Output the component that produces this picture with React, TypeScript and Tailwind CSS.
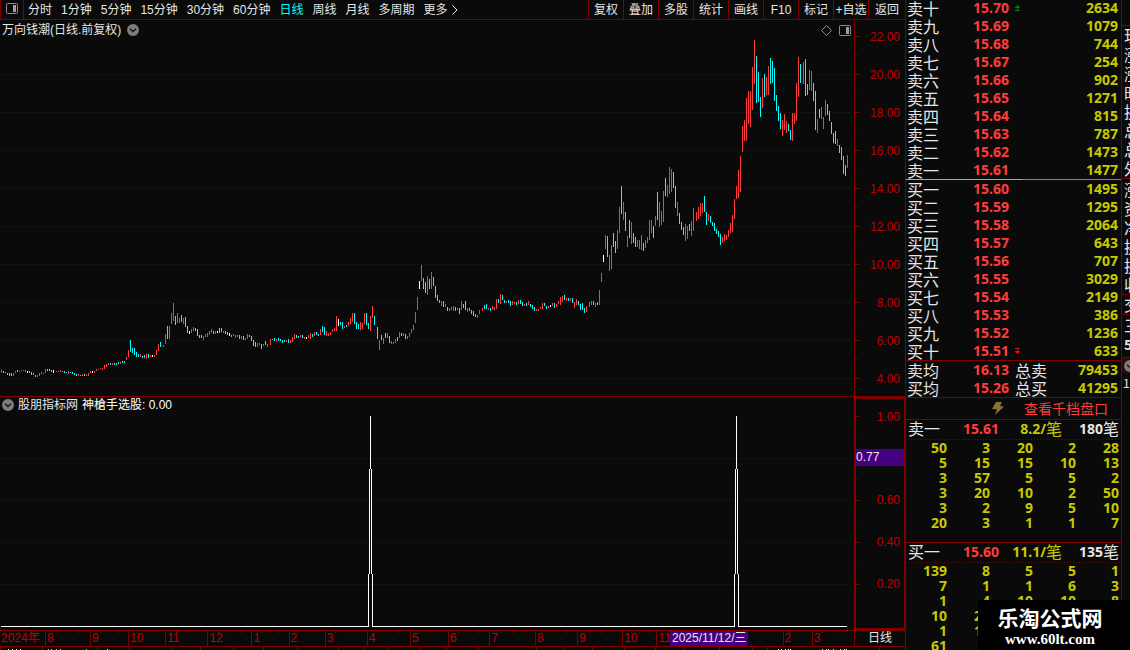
import React from "react";

const SANS = "font-['Liberation_Sans','Noto_Sans_CJK_SC',sans-serif]";

/* Daily ranges: top and bottom row of each bar plus its colour (r up, c down, w flat). */
const RUNS: { x: number; bars: string }[] = [
  {
    x: 1,
    bars: "370-373r 371-373c 372-373c 373-375c 373-376c 373-376c 373-376r 371-373r 370-372c 371-372r 370-371r 370-371r 370-372r 371-373w 371-373c 372-375c 373-375c 375-377c 375-377r 373-376r 372-374r 373-374r 369-373r 369-371c 369-371c 370-372c 370-373w",
  },
  {
    x: 56,
    bars: "371-372r 371-372r 370-372r 371-372c 371-373c 372-373c 371-374r 372-373c 372-374c 373-375c 374-376c 374-376r 375-376c 374-376r 374-376c 374-376r 373-376r 371-373r 371-373w 371-373r 369-371r 369-370r 368-369r 368-370r 365-369r 364-367r 363-365r 363-365c 363-365r 363-365c 363-365c 362-364c 362-364r 361-363c 361-363c 357-360r 350-357r 340-352c 348-353c 348-355c 352-357c 354-357c 354-357r 356-358c 355-358c 354-359r 354-358c 355-357r 355-357w 355-357r 350-355r 344-351r 342-347c",
  },
  {
    x: 163,
    bars: "345-347r 334-344r 326-339c 326-339r 313-324r 303-321r 316-325c 313-323r 318-323r 315-322c 318-324r 317-327c 326-333c 331-334w 329-333r 327-331r 328-331c 329-336c 335-338c 335-338c 336-340r 334-337r 333-337r 331-335r 329-333r 331-334c 331-334r 331-333w 328-333c 328-332c 331-333r 331-334c 332-335c 333-336w 335-337c 334-336r 335-338r 335-337r 335-339c 336-339r 336-340c 338-340r 334-339r 335-337c 336-341c 340-346c 342-347c 343-347r 343-345r 344-349c 344-346r 341-345c 344-347r",
  },
  {
    x: 270,
    bars: "339-345r 339-340c 338-341c 339-341r 338-341c 339-341c 340-343c 340-342c 340-342r 339-343c 340-343r 337-342r 334-339r 335-338c 336-338c 335-337r 335-338c 337-339r 337-339w 335-338r 333-339r 334-337c 332-336r 332-335c 334-336c 329-335r 326-332c 327-335c 331-336r 333-336r 332-335r 329-332r 328-331r 316-331r 319-326w 322-325c 322-329c 326-328r 325-327c 322-326r 318-324r 313-322r 313-324c 322-329c 324-329c 322-330r 323-329r 313-324r 313-325c 323-329c 316-331r 306-318r 316-325c",
  },
  {
    x: 377,
    bars: "327-339c 340-350r 335-340c 338-344r 333-338c 333-338r 336-343c 341-344r 342-344r 339-343r 337-341c 332-338r 333-336c 333-336r 334-339c 336-339r 333-337r 329-333r 325-330r 312-323r 297-310r 281-289w 265-281r 278-289c 282-293c 276-295r 279-289c 272-289r 277-286c 286-298c 295-301c 300-303c 301-306r 301-307c 304-307r 307-311c 308-311r 307-310r 306-311r 307-311c 308-310r 308-314c 301-310r 304-308c 301-310c 308-312r 308-311c 310-314c 311-316c 314-317c 315-318r 310-314r",
  },
  {
    x: 482,
    bars: "308-311r 305-309c 304-309c 308-310r 308-311c 306-310r 307-310r 299-309r 299-303c 294-304r 295-300c 300-303c 301-303r 300-303c 301-306c 301-305r 302-304r 302-305c 300-304r 300-304c 302-306c 304-306r 303-306c 301-305r 304-307c 305-309c 307-311c 309-311r 309-311r 307-309r 303-309r 303-306c 306-309c 306-308r 305-307w 303-306r 303-308c 304-307r 301-304r 297-305r 296-302r 295-300c 298-301r 298-301c 298-301r 298-303c 302-308r 299-305r 301-305c 304-310c 303-310c 308-313c 306-312r",
  },
  {
    x: 589,
    bars: "302-307r 301-305r 301-305c 303-307r 302-305c 290-305r 273-282r 255-262w 235-249r 236-257c 255-271r 245-269r 233-247c 241-253c 230-249r 207-233r 186-214c 202-220r 212-231c 236-247r 220-238c 222-244r 233-243c 237-247c 240-247r 240-249r 235-250r 243-251c 240-248r 237-243r 220-240r 220-233r 226-238c 216-226r 192-220c 202-227r 211-225r 191-222r 178-196c 185-197r 167-194r 169-192r 172-188c 186-208c 202-216r 213-224c 222-230c 227-235c 224-241r 226-239r 224-231c 221-236r 208-231r",
  },
  {
    x: 696,
    bars: "212-221r 207-219r 203-216r 203-213r 196-212c 212-225c 214-221r 216-223c 222-226c 223-231c 229-234c 231-237c 234-245c 237-243r 234-241r 235-240r 230-237r 223-233r 215-232r 199-219r 186-199r 170-198r 156-192r 126-152r 120-141r 98-141r 91-124r 91-127r 67-110r 40-84r 56-103c 72-102c 97-117c 78-108r 74-97c 77-95r 66-95r 58-84c 61-83c 68-101c 95-111c 106-121c 113-129c 120-136r 114-130r 121-133r 124-131c 130-140c 113-141r 113-124r 83-121r 57-97r 64-83c",
  },
  {
    x: 803,
    bars: "62-84r 59-96c 84-95c 70-90r 71-91r 83-101c 91-130c 119-133r 109-118c 107-119r 117-129r 100-116r 104-115c 111-121c 122-134c 133-143c 131-144c 139-146r 145-153c 147-160c 156-174c 165-176c 155-168r",
  },
];

const BAR_FILL: Record<string, string> = { r: "#ff3c3c", c: "#00ffff", w: "#ffffff" };

const bars = RUNS.flatMap((run) =>
  run.bars.split(" ").map((b, i) => {
    const [top, rest] = b.split("-");
    return {
      x: run.x + i * 2,
      y: Number(top),
      h: parseInt(rest, 10) - Number(top),
      fill: BAR_FILL[rest.slice(-1)],
    };
  }),
);

const PERIODS = ["分时", "1分钟", "5分钟", "15分钟", "30分钟", "60分钟", "日线", "周线", "月线", "多周期"];
const TOOLS = ["复权", "叠加", "多股", "统计", "画线", "F10", "标记", "+自选", "返回"];
const PRICE_LABELS = ["22.00", "20.00", "18.00", "16.00", "14.00", "12.00", "10.00", "8.00", "6.00", "4.00"];

const MONTHS: [string, number][] = [
  ["2024年", 46],
  ["8", 45],
  ["9", 38],
  ["10", 37],
  ["11", 42],
  ["12", 44],
  ["1", 37],
  ["2", 36],
  ["3", 42],
  ["4", 43],
  ["5", 38],
  ["6", 41],
  ["7", 46],
  ["8", 42],
  ["9", 45],
  ["10", 34],
  ["11", 92],
  ["", 35],
  ["2", 29],
  ["3", 42],
];

const SELLS = [
  ["卖十", "15.70", "2634"],
  ["卖九", "15.69", "1079"],
  ["卖八", "15.68", "744"],
  ["卖七", "15.67", "254"],
  ["卖六", "15.66", "902"],
  ["卖五", "15.65", "1271"],
  ["卖四", "15.64", "815"],
  ["卖三", "15.63", "787"],
  ["卖二", "15.62", "1473"],
  ["卖一", "15.61", "1477"],
];
const BUYS = [
  ["买一", "15.60", "1495"],
  ["买二", "15.59", "1295"],
  ["买三", "15.58", "2064"],
  ["买四", "15.57", "643"],
  ["买五", "15.56", "707"],
  ["买六", "15.55", "3029"],
  ["买七", "15.54", "2149"],
  ["买八", "15.53", "386"],
  ["买九", "15.52", "1236"],
  ["买十", "15.51", "633"],
];
const AVERAGES = [
  ["卖均", "16.13", "79453", "总卖"],
  ["买均", "15.26", "41295", "总买"],
];

const SELL_TICKETS = [
  [50, 3, 20, 2, 28],
  [5, 15, 15, 10, 13],
  [3, 57, 5, 5, 2],
  [3, 20, 10, 2, 50],
  [3, 2, 9, 5, 10],
  [20, 3, 1, 1, 7],
];
const BUY_TICKETS = [
  [139, 8, 5, 5, 1],
  [7, 1, 1, 6, 3],
  [1, 4, 10, 10, 8],
  [10, 20],
  [1, 10],
  [61],
];

function PanelIcon({ className }: { className: string }) {
  return (
    <svg viewBox="0 0 12 11" className={className} aria-hidden="true">
      <rect x="0.5" y="0.5" width="11" height="10" rx="1" fill="none" stroke="#8c8c8c" />
      <rect x="7" y="2" width="3" height="7" fill="#a0a0a0" />
    </svg>
  );
}

function RoundChevron() {
  return (
    <svg viewBox="0 0 12 12" className="size-3 shrink-0" aria-hidden="true">
      <circle cx="6" cy="6" r="6" fill="#7c7c7c" />
      <path d="M3 4.8 L6 7.6 L9 4.8" fill="none" stroke="#141414" strokeWidth="1.4" />
    </svg>
  );
}

function Toolbar() {
  return (
    <nav className="flex h-5 items-stretch border-b border-[#800000] text-xs leading-[18px] whitespace-nowrap text-[#e6e6e6]">
      <button aria-label="侧栏" className="flex w-6 shrink-0 justify-center border-x border-[#800000] pt-[3px]">
        <PanelIcon className="h-[11px] w-3" />
      </button>
      <div className="flex min-w-0 flex-1 gap-[9px] overflow-hidden pl-1">
        {PERIODS.map((p) => (
          <button key={p} className={p === "日线" ? "shrink-0 text-[#00ffff]" : "shrink-0"}>
            {p}
          </button>
        ))}
        <button className="flex shrink-0 items-center gap-1">
          更多
          <svg viewBox="0 0 6 10" className="h-[10px] w-[6px]" aria-hidden="true">
            <path d="M0.5 0.5 L5 5 L0.5 9.5" fill="none" stroke="#e6e6e6" />
          </svg>
        </button>
      </div>
      <div className="flex shrink-0">
        {TOOLS.map((t) => (
          <button key={t} className="w-[35px] border-l border-[#800000] text-center last:w-[37px]">
            {t}
          </button>
        ))}
      </div>
    </nav>
  );
}

function DottedRow({ y }: { y: number }) {
  return <line x1="1" x2="851" y1={y + 0.5} y2={y + 0.5} stroke="#800000" strokeDasharray="1 3" />;
}

function PriceChart() {
  return (
    <section className="flex h-[377px] border-b border-[#800000]">
      <div className="relative min-w-0 flex-1">
        <svg
          viewBox="0 20 854 376"
          preserveAspectRatio="none"
          shapeRendering="crispEdges"
          className="h-full w-full"
          role="img"
          aria-label="日线"
        >
          {[74, 112, 150, 188, 226, 264, 302, 340, 378].map((y) => (
            <DottedRow key={y} y={y} />
          ))}
          {bars.map((b) => (
            <rect key={b.x} x={b.x} y={b.y} width="1" height={b.h} fill={b.fill} />
          ))}
        </svg>
        <div className="absolute inset-x-0 top-0 flex h-5 items-center pr-[3px] pl-[2px]">
          <h1 className="text-xs text-[#e6e6e6]">万向钱潮(日线.前复权)</h1>
          <button aria-label="展开" className="ml-[6px]">
            <RoundChevron />
          </button>
          <button aria-label="标记" className="ml-auto">
            <svg viewBox="0 0 11 11" className="size-[11px]" aria-hidden="true">
              <path d="M5.5 0.5 L10.5 5.5 L5.5 10.5 L0.5 5.5 Z" fill="none" stroke="#8c8c8c" />
            </svg>
          </button>
          <button aria-label="侧栏" className="ml-[7px]">
            <PanelIcon className="h-[11px] w-3" />
          </button>
        </div>
      </div>
      <div className="flex w-[51px] shrink-0 border-l border-[#800000] text-xs leading-4 text-[#c00000]">
        <svg viewBox="0 20 6 376" className="h-full w-[6px]" shapeRendering="crispEdges" aria-hidden="true">
          {PRICE_LABELS.map((l, i) => (
            <g key={l} fill="#800000">
              <rect x="0" y={36 + i * 38} width="5" height="1" />
              {i < 9 && <rect x="0" y={55 + i * 38} width="2" height="1" />}
            </g>
          ))}
        </svg>
        <div className="flex flex-1 flex-col gap-[22px] pt-[9px] pr-[5px] text-right">
          {PRICE_LABELS.map((l) => (
            <span key={l}>{l}</span>
          ))}
        </div>
      </div>
    </section>
  );
}

/* The signal narrows in three steps towards its peak. */
function spike(x: number) {
  return [
    `M${x - 1.5} 627 V574`,
    `M${x - 0.5} 574 V469`,
    `M${x + 0.5} 469 V416`,
    `M${x + 1.5} 469 V574`,
    `M${x + 2.5} 574 V627`,
  ].join(" ");
}

function SignalChart() {
  return (
    <section className="flex h-[233px]">
      <div className="relative min-w-0 flex-1">
        <svg
          viewBox="0 397 854 233"
          preserveAspectRatio="none"
          shapeRendering="crispEdges"
          className="h-full w-full"
          role="img"
          aria-label="神槍手选股"
        >
          {[458, 500, 542, 584].map((y) => (
            <DottedRow key={y} y={y} />
          ))}
          <path d="M1 626.5 H369 M372 626.5 H735 M738 626.5 H847" fill="none" stroke="#ffffff" />
          <path d={spike(370)} fill="none" stroke="#ffffff" />
          <path d={spike(736)} fill="none" stroke="#ffffff" />
        </svg>
        <div className="absolute inset-x-0 top-0 flex h-4 items-center pl-[2px] text-xs text-white">
          <button aria-label="展开">
            <RoundChevron />
          </button>
          <h2 className="ml-1 text-[#e6e6e6]">股朋指标网</h2>
          <span className="ml-1">神槍手选股: 0.00</span>
        </div>
      </div>
      <div className="flex w-[51px] shrink-0 border-y-2 border-r border-l-2 border-[#800000] text-xs leading-4 text-[#c00000]">
        <div className="relative flex flex-1 flex-col">
          <svg viewBox="0 399 5 229" className="absolute top-0 left-0 h-full w-[5px]" shapeRendering="crispEdges" aria-hidden="true">
            {[416, 500, 542, 584].map((y) => (
              <rect key={y} x="0" y={y} width="4" height="1" fill="#800000" />
            ))}
            {[437, 479, 521, 563].map((y) => (
              <rect key={y} x="0" y={y} width="1" height="1" fill="#800000" />
            ))}
          </svg>
          <span className="mt-[10px] pr-[4px] text-right">1.00</span>
          <span className="mt-6 mb-[26px] h-[17px] border-y border-[#800000] bg-[#440080] leading-[15px] text-[#e6e6e6]">0.77</span>
          <div className="flex flex-col gap-[26px] pr-[4px] text-right">
            <span>0.60</span>
            <span>0.40</span>
            <span>0.20</span>
          </div>
        </div>
      </div>
    </section>
  );
}

function Timeline() {
  return (
    <div className="flex h-[17px] border-y border-[#800000] text-xs leading-[15px]">
      <div className="relative flex min-w-0 flex-1 text-[#c00000]">
        {MONTHS.map(([label, span], i) => (
          <div
            key={i}
            className={
              i === 0
                ? "min-w-0 basis-0 whitespace-nowrap"
                : "relative min-w-0 basis-0 border-l border-[#800000]"
            }
            style={{ flexGrow: span }}
          >
            <span className="ml-px">{label}</span>
            {i > 0 && (
              <div className="absolute inset-x-0 top-0 flex justify-evenly">
                <i className="h-[2px] w-px bg-[#800000]" />
                <i className="h-[2px] w-px bg-[#800000]" />
                <i className="h-[2px] w-px bg-[#800000]" />
              </div>
            )}
          </div>
        ))}
        <time className="absolute inset-y-0 right-[106px] w-[78px] overflow-hidden bg-[#440080] pl-[2px] whitespace-nowrap text-[#e6e6e6]">
          2025/11/12/三
        </time>
      </div>
      <button className="w-[51px] shrink-0 border-l border-[#800000] text-center text-[#e6e6e6]">日线</button>
    </div>
  );
}

function TickerEdge() {
  const seps = [0, 42, 97, 129, 171, 200, 233, 263, 297, 338, 364, 388, 420, 446, 478, 536, 564, 592, 624, 655, 684, 719, 752, 767, 879];
  const white = [8, 12, 16, 20, 107, 778, 781, 785, 788, 790, 822, 826, 828, 833, 840, 844, 846];
  const gold = [48, 51, 56, 60, 86];
  return (
    <svg viewBox="0 0 905 3" preserveAspectRatio="none" className="h-[3px] w-full" shapeRendering="crispEdges" aria-hidden="true">
      {seps.map((x) => (
        <rect key={x} x={x} y="0" width="1" height="3" fill="#800000" />
      ))}
      {white.map((x) => (
        <rect key={x} x={x} y="2" width="1" height="1" fill="#e6e6e6" />
      ))}
      {gold.map((x) => (
        <rect key={x} x={x} y="2" width="1" height="1" fill="#c8c800" />
      ))}
    </svg>
  );
}

function Arrow({ up }: { up: boolean }) {
  const widths = up ? [1, 3, 5, 1, 1, 5] : [5, 1, 1, 5, 3, 1];
  return (
    <svg viewBox="0 0 5 6" className="h-[6px] w-[5px]" shapeRendering="crispEdges" aria-hidden="true">
      {widths.map((w, i) => (
        <rect key={i} x={(5 - w) / 2} y={i} width={w} height="1" fill={up ? "#008000" : "#ff0000"} />
      ))}
    </svg>
  );
}

function Quotes({ rows, arrow }: { rows: string[][]; arrow?: "up" | "down" }) {
  return (
    <table className="w-full table-fixed border-collapse leading-[18px]">
      <colgroup>
        <col className="w-[43px]" />
        <col className="w-[60px]" />
        <col className="w-[44px]" />
        <col />
      </colgroup>
      <tbody>
        {rows.map(([label, price, volume, note], i) => (
          <tr key={label} className="h-[18px]">
            <th
              scope="row"
              className="h-[18px] p-0 pl-px text-left align-top font-['Noto_Sans_CJK_SC',sans-serif] text-base leading-[18px] font-normal text-[#e6e6e6]"
            >
              {label}
            </th>
            <td className="p-0 text-right align-top font-['Noto_Sans',sans-serif] text-sm leading-[18px] font-bold text-[#ff3c3c]">
              {price}
            </td>
            <td className="p-0 pl-[6px] align-top font-['Noto_Sans_CJK_SC',sans-serif] text-base leading-[18px] whitespace-nowrap text-[#e6e6e6]">
              {note}
              {arrow && i === (arrow === "up" ? 0 : rows.length - 1) && (
                <span className="flex h-[18px] items-center">
                  <Arrow up={arrow === "up"} />
                </span>
              )}
            </td>
            <td className="p-0 pr-[3px] text-right align-top font-['Noto_Sans',sans-serif] text-sm leading-[18px] font-bold text-[#c8c800]">
              {volume}
            </td>
          </tr>
        ))}
      </tbody>
    </table>
  );
}

function Tickets({
  side,
  price,
  average,
  count,
  rows,
}: {
  side: string;
  price: string;
  average: string;
  count: string;
  rows: number[][];
}) {
  return (
    <section className="font-['Noto_Sans','Noto_Sans_CJK_SC',sans-serif]">
      <header className="flex h-[19px] px-[2px] text-base leading-[18px] text-[#e6e6e6]">
        <span className="w-8">{side}</span>
        <b className="w-[59px] text-right text-sm leading-[18px] text-[#ff3c3c]">{price}</b>
        <span className="flex flex-1 justify-end text-[#c8c800]">
          <b className="text-sm leading-[18px]">{average}/</b>笔
        </span>
        <span className="flex w-[57px] justify-end">
          <b className="text-sm leading-[18px]">{count}</b>笔
        </span>
      </header>
      <svg className="block h-px w-full" shapeRendering="crispEdges" aria-hidden="true">
        <line x1="2" x2="100%" y1="0.5" y2="0.5" stroke="#800000" strokeDasharray="1 2" />
      </svg>
      <table className="w-full table-fixed border-collapse text-sm leading-[15px] font-bold text-[#c8c800]">
        <tbody>
          {rows.map((row, i) => (
            <tr key={i}>
              {[0, 1, 2, 3, 4].map((j) => (
                <td key={j} className="p-0 pr-[2px] text-right">
                  {row[j]}
                </td>
              ))}
            </tr>
          ))}
        </tbody>
      </table>
    </section>
  );
}

function OrderBook() {
  return (
    <aside className="w-[216px] shrink-0 border-l border-[#800000]">
      <div className="-mt-px">
        <Quotes rows={SELLS} arrow="up" />
      </div>
      <div className="flex h-px">
        <i className="w-[116px] bg-[#e0a040]" />
        <i className="flex-1 bg-[#4a90d9]" />
      </div>
      <Quotes rows={BUYS} arrow="down" />
      <div className="border-y border-[#800000]">
        <Quotes rows={AVERAGES} />
      </div>
      <div className="flex h-[22px] items-center justify-end border-b border-[#800000] pr-[13px]">
        <svg viewBox="0 0 12 13" className="h-[13px] w-3" aria-hidden="true">
          <path d="M4 0 L10 0 L8 4 L12 4.5 L3 13 L5 7.5 L0 7 Z" fill="#857534" />
        </svg>
        <a href="#depth" className="ml-5 text-sm leading-5 text-[#ff3c3c]">
          查看千档盘口
        </a>
      </div>
      <div className="h-[123px] border-b border-[#800000]">
        <Tickets side="卖一" price="15.61" average="8.2" count="180" rows={SELL_TICKETS} />
      </div>
      <Tickets side="买一" price="15.60" average="11.1" count="135" rows={BUY_TICKETS} />
    </aside>
  );
}

function DetailStrip() {
  return (
    <aside className="w-[9px] shrink-0 overflow-hidden border-l border-[#800000] pt-[25px] font-['Noto_Sans_CJK_SC',sans-serif] text-base leading-[19px] text-[#e6e6e6]">
      <div className="w-5 border-y border-[#800000] pl-[2px]">
        {["现", "涨", "涨", "时", "换", "总", "总", "外"].map((c, i) => (
          <div key={i}>{c}</div>
        ))}
      </div>
      <div className="w-5 border-b border-[#800000] pt-px pl-[2px]">
        {["涨", "资", "净", "换", "换", "收"].map((c, i) => (
          <div key={i}>{c}</div>
        ))}
      </div>
      <div className="w-5 border-b border-[#800000] pl-[2px]">交</div>
      <div className="w-5 border-b border-[#800000] pt-px pl-[2px]">
        <div>三</div>
        <b className="block h-[22px] text-sm leading-[19px]">5</b>
      </div>
      <div className="flex h-4 w-5 items-center bg-[#300808] pl-[2px]">
        <RoundChevron />
      </div>
      <div className="pl-px text-xs leading-[18px]">1</div>
    </aside>
  );
}

export default function App() {
  return (
    <div className={`${SANS} relative flex h-screen overflow-hidden bg-[#0a0a0a]`}>
      <main className="flex min-w-0 flex-1 flex-col">
        <Toolbar />
        <PriceChart />
        <SignalChart />
        <Timeline />
        <TickerEdge />
      </main>
      <OrderBook />
      <DetailStrip />
      <div className="absolute right-0 bottom-0 flex h-[50px] w-[152px] flex-col items-center bg-black pt-[7px] pr-2 text-white">
        <strong className="text-[21px] leading-6">乐淘公式网</strong>
        <span className="font-['Liberation_Serif',serif] text-[15px] leading-4 font-bold">www.60lt.com</span>
      </div>
    </div>
  );
}
